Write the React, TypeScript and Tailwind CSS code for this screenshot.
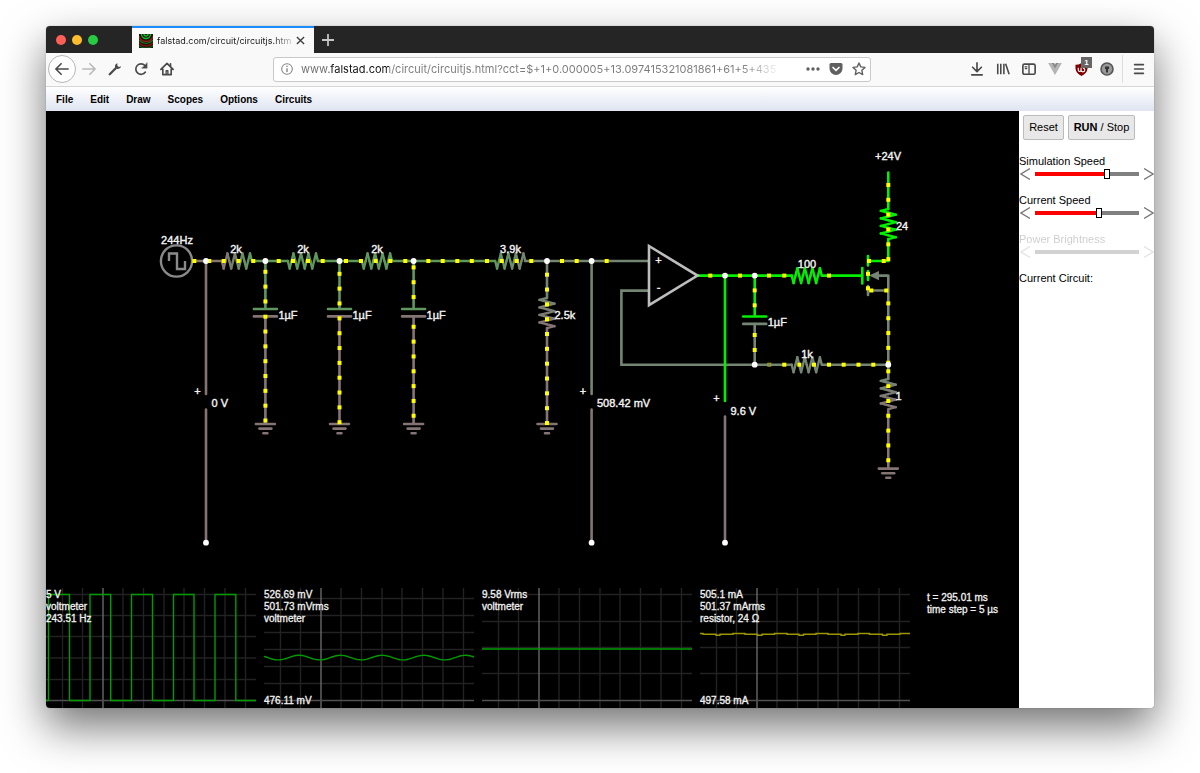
import { ReactNode } from "react";

const GND = "#857474";
const MID = "#748574";
const HOT = "#00f000";
const GREEN = "#5f975f";

function mix(a: string, b: string, t: number) {
  const part = (c: string, i: number) => parseInt(c.slice(i, i + 2), 16);
  const out = [1, 3, 5].map((i) => Math.round(part(a, i) + (part(b, i) - part(a, i)) * t));
  return `rgb(${out.join(",")})`;
}

function Wire({ d, c }: { d: string; c: string }) {
  return <path d={d} stroke={c} strokeWidth={2.6} fill="none" strokeLinecap="round" />;
}

// zigzag of 16 short segments, coloured by the voltage drop from one end to the other
function Resistor({ x, y, from, to, vertical }: { x: number; y: number; from: string; to: string; vertical?: boolean }) {
  const offsets = [0, 1, 0, -1];
  const segs = [];
  for (let i = 0; i < 16; i++) {
    const a = i * 1.88;
    const b = (i + 1) * 1.88;
    const oa = offsets[i % 4] * 7.5;
    const ob = offsets[(i + 1) % 4] * 7.5;
    const p = vertical ? [x - oa, y + a, x - ob, y + b] : [x + a, y + oa, x + b, y + ob];
    segs.push(<line key={i} x1={p[0]} y1={p[1]} x2={p[2]} y2={p[3]} stroke={mix(from, to, i / 15)} strokeWidth={2.4} strokeLinecap="round" />);
  }
  return <g>{segs}</g>;
}

function Capacitor({ x, y, top, bottom }: { x: number; y: number; top: string; bottom: string }) {
  return (
    <g>
      <Wire d={`M${x - 11.5} ${y}H${x + 11.5}`} c={top} />
      <Wire d={`M${x - 11.5} ${y + 7.4}H${x + 11.5}`} c={bottom} />
      <Label x={x + 13} y={y + 9.5}>1µF</Label>
    </g>
  );
}

function Ground({ x, y }: { x: number; y: number }) {
  return <Wire d={`M${x - 9.5} ${y}h19M${x - 6} ${y + 4.6}h12M${x - 2} ${y + 9.2}h4`} c={GND} />;
}

function Label({ x, y, children, middle }: { x: number; y: number; children: ReactNode; middle?: boolean }) {
  return (
    <text x={x} y={y} fontSize={11} fill="#f2f2f2" stroke="#f2f2f2" strokeWidth={0.4} textAnchor={middle ? "middle" : "start"}>
      {children}
    </text>
  );
}

const run = (start: number, count: number) => Array.from({ length: count }, (_, i) => start + i * 14.83);

const rowDots: [number, number[]][] = [
  [261, [194.3, 209.3, 223.7, 238.5, 253.3, 278.7, 293, 308, 322.7, 346, 361, 375.7, 390.3, 405.3, 428.3, 442.7, 457.3, 471.8, 487, 501.7, 516.7, 531.3, 562, 576.7, 606.7, 869, 883.7]],
  [275.6, [710.3, 740, 769, 784.3, 829]],
  [290.5, [871.3, 886.3]],
  [364.7, [784.3, 799.3, 814, 829, 843.7, 858.5, 873.3]],
];

const columnDots: [number, number[]][] = [
  [265.4, [...run(271.8, 3), ...run(316.7, 8)]],
  [339.5, [...run(273.8, 3), ...run(318.4, 8)]],
  [413.6, [...run(267.4, 3), ...run(326.8, 7)]],
  [547, run(274.7, 11)],
  [754.7, [290.4, 305.3, 335, 350]],
  [868, [273.8, 288.3]],
  [888.3, [...run(185, 6), ...run(303.4, 5), ...run(371.3, 7)]],
];

const nodes = [
  [206, 261], [265.4, 261], [339.5, 261], [413.6, 261], [547, 261], [591.6, 261],
  [725, 275.6], [754.7, 275.6], [754.7, 364.7], [888.3, 364.7],
  [206, 542.7], [591.6, 542.7], [725, 542.7],
];

function Schematic() {
  return (
    <svg viewBox="46 111 973 477" className="block w-full" role="img" aria-label="Circuit">
      {/* source and voltmeter */}
      <Wire d="M193 261H222" c={GND} />
      <Wire d="M206 261V394M206 409.500V542" c={GND} />
      <circle cx={176.5} cy={261} r={15.6} fill="none" stroke="#8a8a8a" strokeWidth={2.4} />
      <path d="M169 261V253.500H177V269H185V261" fill="none" stroke="#8a8a8a" strokeWidth={2.4} />

      {/* RC ladder */}
      <Wire d="M252 261H288M265.400 261V308" c={GREEN} />
      <Wire d="M318 261H362M339.500 261V308" c={GREEN} />
      <Wire d="M392 261H495M413.600 261V308" c={GREEN} />
      <Wire d="M525 261H648M547 261V298" c={MID} />
      <Wire d="M265.400 317V423M339.500 317V423M413.600 317V423M547 328V423" c={GND} />
      <Resistor x={221.8} y={261} from={GND} to={GREEN} />
      <Resistor x={287.8} y={261} from={GREEN} to={GREEN} />
      <Resistor x={361.9} y={261} from={GREEN} to={GREEN} />
      <Resistor x={495.2} y={261} from={GREEN} to={MID} />
      <Resistor x={547} y={298} from={MID} to={GND} vertical />
      <Capacitor x={265.4} y={309} top={GREEN} bottom={GND} />
      <Capacitor x={339.5} y={309} top={GREEN} bottom={GND} />
      <Capacitor x={413.6} y={309} top={GREEN} bottom={GND} />
      <Ground x={265.4} y={424} />
      <Ground x={339.5} y={424} />
      <Ground x={413.6} y={424} />
      <Ground x={547} y={424} />
      <Wire d="M591.600 261V394" c={MID} />
      <Wire d="M591.600 409.500V542M725 416.500V542" c={GND} />

      {/* op-amp and feedback */}
      <Wire d="M648 290.600H621.400V364.700H791.700M754.700 324V364M822 364.700H888M888.300 275.600V379M879 275.600H888.300M868 290.500H888.300" c={MID} />
      <Wire d="M698 275.600H792M822 275.600H862M725 275.600V401M754.700 275.600V315" c={HOT} />
      <path d="M649 246L697.500 275.600L649 305.200Z" fill="none" stroke="#bdbdbd" strokeWidth={2.6} />
      <Capacitor x={754.7} y={316.5} top={HOT} bottom={MID} />
      <Resistor x={791.7} y={275.6} from={HOT} to={HOT} />
      <Resistor x={791.7} y={364.7} from={MID} to={MID} />

      {/* transistor, load and sense resistor */}
      <Wire d="M888.300 172.500V209M888.300 239V261H868M862.300 268V283.500M868 256V265.500M868 271V280" c={HOT} />
      <Wire d="M868 286V295" c={MID} />
      <path d="M869 275.600L879 271V280.200Z" fill={MID} />
      <Resistor x={888.3} y={209} from={HOT} to={HOT} vertical />
      <Resistor x={888.3} y={379} from={MID} to={GND} vertical />
      <Wire d="M888.300 409.500V468" c={GND} />
      <Ground x={888.3} y={468.6} />

      {rowDots.map(([y, xs]) => xs.map((x) => <rect key={`${x}-${y}`} x={x - 2} y={y - 2} width={4} height={4} fill="#ffff00" />))}
      {columnDots.map(([x, ys]) => ys.map((y) => <rect key={`${x}-${y}`} x={x - 2} y={y - 2} width={4} height={4} fill="#ffff00" />))}
      <rect x={767.8} y={363.2} width={3} height={3} fill="none" stroke="#a0a020" />
      {nodes.map(([x, y]) => <circle key={`${x}-${y}`} cx={x} cy={y} r={2.9} fill="#fff" />)}

      <Label x={177} y={243.5} middle>244Hz</Label>
      <Label x={236} y={253} middle>2k</Label>
      <Label x={303} y={253} middle>2k</Label>
      <Label x={377} y={253} middle>2k</Label>
      <Label x={510.5} y={253} middle>3.9k</Label>
      <Label x={554.5} y={318.5}>2.5k</Label>
      <Label x={807} y={268} middle>100</Label>
      <Label x={807} y={357.5} middle>1k</Label>
      <Label x={888} y={160} middle>+24V</Label>
      <Label x={896} y={230}>24</Label>
      <Label x={895.5} y={400}>1</Label>
      <Label x={197.5} y={395} middle>+</Label>
      <Label x={583} y={395} middle>+</Label>
      <Label x={716.5} y={402} middle>+</Label>
      <Label x={658.5} y={264} middle>+</Label>
      <Label x={658.5} y={291} middle>-</Label>
      <Label x={211.5} y={407}>0 V</Label>
      <Label x={597} y={407}>508.42 mV</Label>
      <Label x={730.5} y={414.5}>9.6 V</Label>
    </svg>
  );
}

const gridX = [16.5, 36.5, 77, 97.5, 118, 138, 158.5, 179, 199.5];

function sineTrace() {
  const pts = [];
  for (let x = 0; x <= 210; x += 2) {
    pts.push(`${x},${(69.6 - 2.3 * Math.cos(((x - 35) / 41.6) * 2 * Math.PI)).toFixed(1)}`);
  }
  return "M" + pts.join("L");
}

const scopes = [
  {
    lines: ["5 V", "voltmeter", "243.51 Hz"],
    grid: [6.5, 27.5, 48.5, 70, 91.5],
    color: "#009c00",
    trace: "M0 112.500H2.500V6.500H23.500V112.500H44V6.500H64.700V112.500H85.500V6.500H106.500V112.500H127.500V6.500H148V112.500H169V6.500H189.800V112.500H210",
  },
  {
    lines: ["526.69 mV", "501.73 mVrms", "voltmeter"],
    bottom: "476.11 mV",
    grid: [10.5, 27.5, 44.5, 61.5, 78.5, 95.5],
    color: "#009c00",
    trace: sineTrace(),
  },
  {
    lines: ["9.58 Vrms", "voltmeter"],
    grid: [6.5, 33.5, 59.5, 85.5],
    color: "#009c00",
    trace: "M0 61H210",
  },
  {
    lines: ["505.1 mA", "501.37 mArms", "resistor, 24 Ω"],
    bottom: "497.58 mA",
    grid: [6.5, 33.5, 59.5, 85.5],
    color: "#9c9600",
    trace: "M0 45.500H3V46.300H16V47.200H20V46.300H33V45.500H45V46.300H57.500V47.200H62V46.300H74.500V45.500H87V46.300H99V47.200H103.500V46.300H116V45.500H128V46.300H141V47.200H145V46.300H158V45.500H169.500V46.300H182.500V47.200H187V46.300H200V45.500H210",
  },
];

function Scope({ scope }: { scope: (typeof scopes)[number] }) {
  return (
    <div className="grid h-[120px]">
      <svg viewBox="0 0 210 120" preserveAspectRatio="none" className="col-start-1 row-start-1 h-[120px] w-full" fill="none">
        <path d={gridX.map((x) => `M${x} 0V120`).join("")} stroke="#222" strokeWidth={1.4} />
        <path d={scope.grid.map((y) => `M0 ${y}H210`).join("")} stroke="#222" strokeWidth={1.4} />
        <path d="M57 0V120" stroke="#686868" strokeWidth={1.4} />
        <path d="M0 112.500H210" stroke="#505050" strokeWidth={1.4} />
        <path d={scope.trace} stroke={scope.color} strokeWidth={1.4} />
      </svg>
      <div className="col-start-1 row-start-1 flex flex-col justify-between pt-px pb-px text-[10px] leading-3 whitespace-nowrap [-webkit-text-stroke:0.3px_#f2f2f2]">
        <div>{scope.lines.map((l) => <p key={l}>{l}</p>)}</div>
        {scope.bottom && <p>{scope.bottom}</p>}
      </div>
    </div>
  );
}

function IconButton({ label, children }: { label: string; children: ReactNode }) {
  return (
    <button aria-label={label} className="flex h-7 w-[26px] shrink-0 items-center justify-center">
      {children}
    </button>
  );
}

function Icon({ children, color = "#4a4a4a" }: { children: ReactNode; color?: string }) {
  return (
    <svg viewBox="0 0 16 16" className="h-[14px] w-[14px] overflow-visible" fill="none" stroke={color} strokeWidth={1.9} strokeLinecap="round" strokeLinejoin="round">
      {children}
    </svg>
  );
}

function TitleBar() {
  return (
    <div className="flex h-[27px] bg-[#252525]">
      <div className="flex w-[86px] items-center gap-[6px] pl-[10px]">
        <span className="h-[10px] w-[10px] rounded-full bg-[#ff5f57]" />
        <span className="h-[10px] w-[10px] rounded-full bg-[#ffbd2e]" />
        <span className="h-[10px] w-[10px] rounded-full bg-[#28ca42]" />
      </div>
      <div className="flex w-[182px] items-center border-t-2 border-[#1a8cff] bg-[#f9f9f9] pl-[7px]">
        <svg viewBox="0 0 14 14" className="h-[14px] w-[14px] shrink-0" fill="none" strokeWidth={1.3}>
          <rect width="14" height="14" fill="#280d06" />
          <path d="M5 0a2 2 0 0 0 4 0M2.500 0a4.500 4.500 0 0 0 9 0" stroke="#0ac02c" />
          <path d="M0 2a7.200 7.200 0 0 0 14 0" stroke="#8c1d10" />
          <path d="M0 6a9 9 0 0 0 14 0" stroke="#0d7420" />
          <path d="M0 9a10 10 0 0 0 14 0" stroke="#7a180d" />
          <path d="M0 11.700a12 12 0 0 0 14 0" stroke="#0c5f1a" />
        </svg>
        <span className="ml-1 w-[138px] text-[9px] whitespace-nowrap text-[#1c1c1c] font-[Inter,sans-serif] [mask-image:linear-gradient(90deg,#000_116px,transparent_140px)]">
          falstad.com/circuit/circuitjs.htm
        </span>
        <button aria-label="Close tab" className="ml-px">
          <svg viewBox="0 0 10 10" className="h-[9px] w-[9px]" stroke="#3d3d3d" strokeWidth={1.5}>
            <path d="M1 1L9 9M9 1L1 9" />
          </svg>
        </button>
      </div>
      <button aria-label="New tab" className="px-2">
        <svg viewBox="0 0 12 12" className="h-3 w-3" stroke="#c4c4c4" strokeWidth={1.8}>
          <path d="M6 0V12M0 6H12" />
        </svg>
      </button>
    </div>
  );
}

function Toolbar() {
  return (
    <div className="flex h-[34px] items-center border-b border-[#d6d6d6] bg-[#f9f9f9] px-[2px] pb-px">
      <button aria-label="Back" className="flex h-7 w-7 shrink-0 items-center justify-center rounded-full border border-[#b5b5b5] bg-white">
        <Icon><path d="M15 8H1.500M7 2L1 8L7 14" /></Icon>
      </button>
      <IconButton label="Forward"><Icon color="#b9b9b9"><path d="M1 8H14.500M9 2L15 8L9 14" /></Icon></IconButton>
      <IconButton label="Developer tools">
        <Icon>
          <path d="M2 14L8.500 7.500" strokeWidth={2.6} />
          <path d="M10.800 1.300a4 4 0 0 0-2.500 5.200l1.300 1.300a4 4 0 0 0 5.300-3l-2.600 1-1.600-1.600z" fill="#4a4a4a" stroke="none" />
        </Icon>
      </IconButton>
      <IconButton label="Reload">
        <Icon>
          <path d="M13 11.500A6 6 0 1 1 12.500 4" />
          <path d="M15 1V7H9Z" fill="#4a4a4a" strokeWidth={0.5} />
        </Icon>
      </IconButton>
      <IconButton label="Home">
        <Icon>
          <path d="M1 8.500L8 1.500L15 8.500M3.200 8V14.500H12.800V8" />
          <path d="M7 14V10H9V14" strokeWidth={1.5} />
          <path d="M12 2V5" />
        </Icon>
      </IconButton>

      <div className="mx-[93px] flex h-[25px] min-w-0 flex-1 items-center rounded-[3px] border border-[#c8c8c8] bg-white pl-[7px]">
        <svg viewBox="0 0 14 14" className="h-3 w-3 shrink-0" fill="none" stroke="#808080" strokeWidth={1.2}>
          <circle cx="7" cy="7" r="6.200" />
          <path d="M7 6V10.500M7 3.200V4.700" strokeWidth={1.6} />
        </svg>
        <input
          aria-label="Address"
          defaultValue="www.falstad.com/circuit/circuitjs.html?cct=$+1+0.000005+13.097415321081861+61+5+435"
          className="ml-2 h-5 min-w-0 flex-1 bg-[linear-gradient(90deg,#6e6e6e_28px,#111_28px,#111_88px,#7a7a7a_88px,#7a7a7a_440px,transparent_480px)] bg-clip-text font-[Inter,sans-serif] text-[11px] text-transparent outline-none"
        />
        <div className="ml-5 flex items-center gap-[9px] pr-1">
          <button aria-label="Page actions">
            <svg viewBox="0 0 14 14" className="h-[14px] w-[14px]" fill="#606060">
              <circle cx="2" cy="7" r="1.700" /><circle cx="7" cy="7" r="1.700" /><circle cx="12" cy="7" r="1.700" />
            </svg>
          </button>
          <button aria-label="Save to Pocket">
            <svg viewBox="0 0 14 14" className="h-[14px] w-[14px]" fill="#606060">
              <path d="M2 1H12Q13.500 1 13.500 2.500V6.500A6.500 6.500 0 0 1 .5 6.500V2.500Q.5 1 2 1Z" />
              <path d="M4 5.500L7 8.300L10 5.500" fill="none" stroke="#fff" strokeWidth={1.7} strokeLinecap="round" />
            </svg>
          </button>
          <button aria-label="Bookmark">
            <svg viewBox="0 0 14 14" className="h-[14px] w-[14px]" fill="none" stroke="#606060" strokeWidth={1.4} strokeLinejoin="round">
              <path d="M7 1L8.800 4.900L13 5.400L9.900 8.300L10.700 12.600L7 10.500L3.300 12.600L4.100 8.300L1 5.400L5.200 4.900Z" />
            </svg>
          </button>
        </div>
      </div>

      <IconButton label="Downloads"><Icon><path d="M8 1V10.500M3 6L8 11L13 6M2 14.800H14" /></Icon></IconButton>
      <IconButton label="Library"><Icon><path d="M2 2V14M5.500 2V14M9 2V14M11 2L15 14" strokeWidth={1.8} strokeLinecap="butt" /></Icon></IconButton>
      <IconButton label="Sidebars">
        <Icon><rect x="1" y="2.500" width="14" height="11.500" rx="1.800" /><path d="M8 3V14M3.500 5.500H5.500M3.800 7.500H5.500" strokeWidth={1.5} /></Icon>
      </IconButton>
      <IconButton label="Vue devtools">
        <svg viewBox="0 0 16 14" className="h-3 w-[14px]">
          <path d="M0 0H4L8 7L12 0H16L8 14Z" fill="#b4b4b4" /><path d="M4 0H7L8 2L9 0H12L8 7Z" fill="#888" />
        </svg>
      </IconButton>
      <button aria-label="uBlock" className="relative flex h-7 w-[26px] shrink-0 items-center justify-center">
        <svg viewBox="0 0 14 14" className="h-[13px] w-[13px]">
          <path d="M7 0Q10 2 13.500 2V6Q13 11 7 14Q1 11 .5 6V2Q4 2 7 0Z" fill="#800000" />
          <path d="M3.500 5V7.500A1.500 1.500 0 0 0 6.500 7.500V5M6.500 7.500A2 2 0 1 0 8.500 5.500" fill="none" stroke="#fff" strokeWidth={1.2} />
        </svg>
        <span className="absolute top-[2px] right-[2px] flex h-[11px] w-[11px] items-center justify-center bg-[#666] text-[8px] font-bold text-white">1</span>
      </button>
      <IconButton label="Password manager">
        <svg viewBox="0 0 14 14" className="h-[14px] w-[14px]">
          <circle cx="7" cy="7" r="6" fill="#999" stroke="#555" strokeWidth={1.6} />
          <path d="M5 4.500H9V7H8V10.500H6V7H5Z" fill="#333" />
        </svg>
      </IconButton>
      <span className="mr-[3px] ml-[2px] h-7 w-px shrink-0 bg-[#dedede]" />
      <IconButton label="Menu">
        <Icon><path d="M3 3H13M3 8H13M3 13H13" /></Icon>
      </IconButton>
    </div>
  );
}

function MenuBar() {
  const items = ["File", "Edit", "Draw", "Scopes", "Options", "Circuits"];
  return (
    <nav className="flex h-6 items-center gap-[17px] bg-linear-to-b from-white to-[#dfe4f1] px-[10px] pt-px text-[10px] font-bold">
      {items.map((item) => <button key={item}>{item}</button>)}
    </nav>
  );
}

function Arrow({ label, d }: { label: string; d: string }) {
  return (
    <button aria-label={label} className="shrink-0">
      <svg viewBox="0 0 10 12" className="h-3 w-[10px]" fill="none" stroke="#777" strokeWidth={1.3}>
        <path d={d} />
      </svg>
    </button>
  );
}

function Slider({ id, label, value, disabled }: { id: string; label: string; value: number; disabled?: boolean }) {
  const rest = disabled ? "#222" : "#808080";
  return (
    <div className={disabled ? "mb-[14px] opacity-20" : "mb-[14px]"}>
      <label htmlFor={id} className="block leading-[13px]">{label}</label>
      <div className="flex h-3 items-center justify-between pl-px">
        <Arrow label={`Lower ${label}`} d="M10 .5L1 6L10 11.500" />
        <input
          id={id}
          type="range"
          defaultValue={value}
          disabled={disabled}
          style={{ backgroundImage: `linear-gradient(90deg, #f00 ${value}%, ${rest} ${value}%)` }}
          className={
            disabled
              ? "h-1 w-[104px] appearance-none [&::-webkit-slider-thumb]:appearance-none [&::-webkit-slider-thumb]:opacity-0"
              : "h-1 w-[104px] appearance-none [&::-webkit-slider-thumb]:h-[10px] [&::-webkit-slider-thumb]:w-[6px] [&::-webkit-slider-thumb]:appearance-none [&::-webkit-slider-thumb]:border [&::-webkit-slider-thumb]:border-black [&::-webkit-slider-thumb]:bg-white"
          }
        />
        <Arrow label={`Raise ${label}`} d="M0 .5L9 6L0 11.500" />
      </div>
    </div>
  );
}

function SidePanel() {
  return (
    <aside className="w-[135px] shrink-0 bg-white text-[11px] text-black">
      <div className="mb-[15px] flex gap-1 pt-1 pl-1">
        <button className="h-[25px] w-[41px] rounded-[2px] border border-[#bbb] bg-[#e8e8e8]">Reset</button>
        <button className="h-[25px] w-[67px] rounded-[2px] border border-[#bbb] bg-[#e8e8e8]"><b>RUN</b> / Stop</button>
      </div>
      <Slider id="sim-speed" label="Simulation Speed" value={70} />
      <Slider id="current-speed" label="Current Speed" value={62} />
      <Slider id="power" label="Power Brightness" value={0} disabled />
      <p className="leading-[13px]">Current Circuit:</p>
    </aside>
  );
}

export default function App() {
  return (
    <div className="min-h-screen overflow-hidden bg-white px-[46px] pt-[26px] pb-[65px] font-['Liberation_Sans',Arial,sans-serif]">
      <div className="overflow-hidden rounded-[4px] shadow-[0_0_1px_rgba(0,0,0,0.5),0_19px_44px_rgba(0,0,0,0.55)]">
        <TitleBar />
        <Toolbar />
        <MenuBar />
        <div className="flex">
          <main className="min-w-0 flex-1 bg-black text-[#f2f2f2]">
            <Schematic />
            <div className="grid grid-cols-[210fr_210fr_210fr_210fr_101fr] gap-x-2">
              {scopes.map((s) => <Scope key={s.lines[0]} scope={s} />)}
              <div className="pt-1 pl-[9px] text-[10px] leading-3 whitespace-nowrap [-webkit-text-stroke:0.3px_#f2f2f2]">
                <p>t = 295.01 ms</p>
                <p>time step = 5 µs</p>
              </div>
            </div>
          </main>
          <SidePanel />
        </div>
      </div>
    </div>
  );
}
